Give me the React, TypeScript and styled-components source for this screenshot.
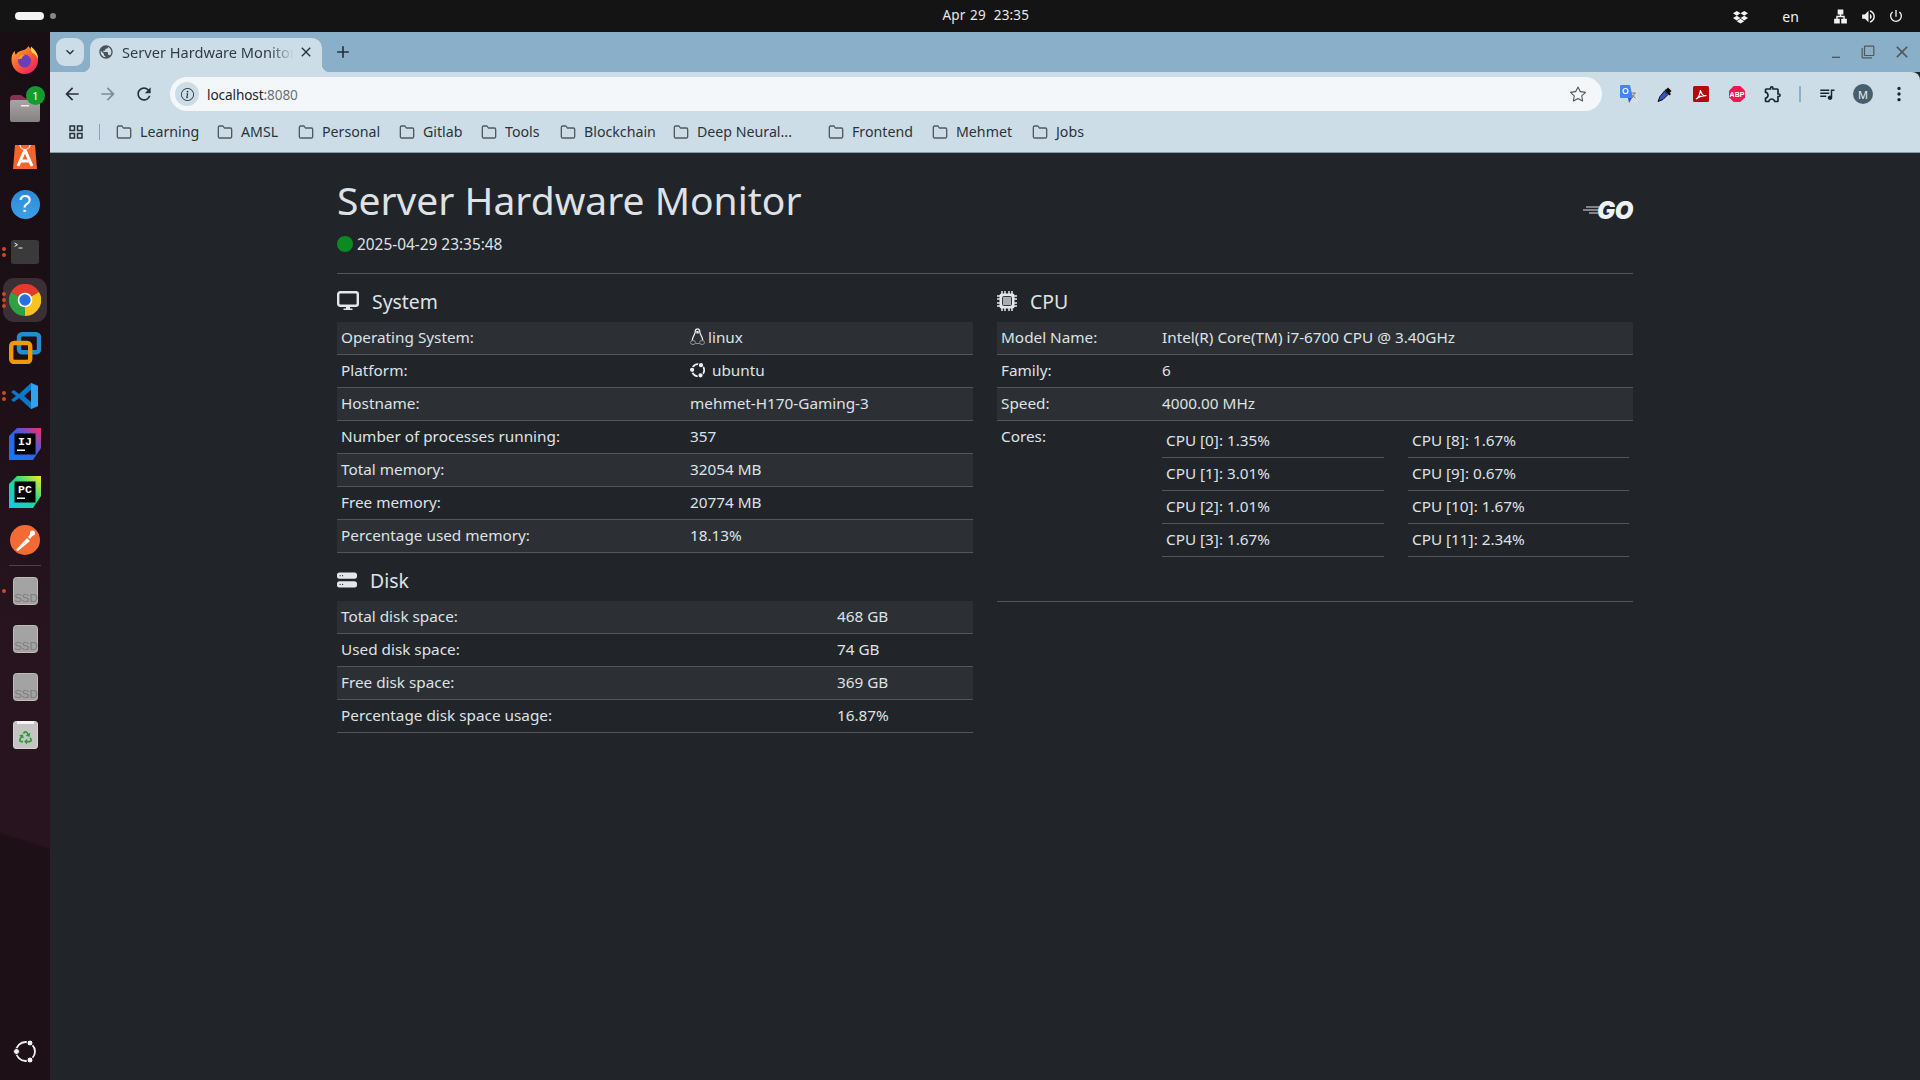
import React from "react";
import styled, { createGlobalStyle } from "styled-components";
import { BsHddStackFill, BsUbuntu, BsStar, BsInfoCircle, BsThreeDotsVertical, BsDropbox } from "react-icons/bs";
import { FaRecycle } from "react-icons/fa";
import { FiFolder } from "react-icons/fi";
import { MdArrowBack, MdArrowForward, MdRefresh, MdKeyboardArrowDown, MdAdd, MdClose, MdOutlineGridView, MdVolumeUp, MdOutlinePowerSettingsNew, MdLan, MdMinimize, MdFilterNone, MdPublic, MdQueueMusic, MdOutlineExtension } from "react-icons/md";

const Global = createGlobalStyle`
  html, body { margin: 0; padding: 0; height: 100%; overflow: hidden; background: #212529; }
  * { box-sizing: border-box; }
  body { font-family: "Noto Sans", "DejaVu Sans", sans-serif; }
`;

const Screen = styled.div`
  width: 1920px; height: 1080px; display: flex; flex-direction: column; overflow: hidden;
`;
const TopBar = styled.header`
  height: 32px; flex: none; background: #141414; color: #e8e8e8; display: grid;
  grid-template-columns: 929.5px auto 1fr; align-items: center; padding: 0 16px 0 13px;
  font-size: 13.5px; letter-spacing: .15px;
`;
const Workspaces = styled.div`display: flex; align-items: center; gap: 6px;`;
const Pill = styled.span`width: 29px; height: 8px; border-radius: 4px; background: #f4f4f4; margin-left: 2px;`;
const Dot = styled.span`width: 6px; height: 6px; border-radius: 50%; background: #888;`;
const Clock = styled.div`display: flex; gap: 8px; word-spacing: 1px; margin-top: -2px;`;
const Tray = styled.div`display: flex; justify-content: flex-end; align-items: center; color: #f2f2f2;`;
const TrayLang = styled.span`margin: 0 33px 0 34px; font-size: 14px;`;
const TrayGap = styled.span`width: 11px;`;

const Main = styled.div`flex: 1; display: flex; min-height: 0;`;
const Dock = styled.nav`
  width: 50px; flex: none; padding: 4px 0 16px; display: flex; flex-direction: column; align-items: center;
  background: linear-gradient(198deg, #180e14 0%, #1c0f16 30%, #28141f 62%, #28141f 76.6%, #1e1017 76.9%, #1e1017 100%);
`;
const Slot = styled.div<{ $active?: boolean }>`
  position: relative; width: 44px; height: 48px; display: flex; align-items: center; justify-content: center; flex: none;
  &::before {
    content: ""; display: ${(p) => (p.$active ? "block" : "none")};
    position: absolute; inset: 2px 0; border-radius: 11px; background: #3a2f35;
  }
  svg { position: relative; }
`;
const Running = styled.div`
  position: absolute; left: 0; top: 50%; transform: translateY(-50%); display: flex; flex-direction: column; gap: 2px;
  margin-left: -1px;
`;
const RunDot = styled.span`width: 4px; height: 4px; border-radius: 50%; background: #d2481c;`;
const DockRule = styled.hr`width: 32px; height: 1px; margin: 1px 0 1px; border: 0; background: #4d4248; flex: none;`;
const DockEnd = styled.div`margin-top: auto; display: flex;`;
const Badge = styled.span`
  position: absolute; right: 2px; top: 2px; width: 19px; height: 19px; border-radius: 50%; background: #119e2f;
  color: #fff; font-size: 11px; display: flex; align-items: center; justify-content: center;
`;

const Browser = styled.div`flex: 1; min-width: 0; display: flex; flex-direction: column;`;
const TabStrip = styled.div`
  height: 40px; flex: none; background: #8ab0c9; display: flex; align-items: flex-end; padding-left: 6px; position: relative; color: #27313a;
`;
const TabList = styled.button`
  width: 28px; height: 28px; margin-bottom: 6px; border: 0; border-radius: 9px; background: #cddde8; padding: 0;
  display: flex; align-items: center; justify-content: center; color: #2a3238; font-size: 16px;
`;
const Tab = styled.div`
  width: 232px; height: 34px; margin-left: 6px; background: #cddde8; border-radius: 10px 10px 0 0;
  display: flex; align-items: center; padding: 0 8px 7px; position: relative; font-size: 14.6px; color: #333c44;
  &::before, &::after { content: ""; position: absolute; bottom: 0; width: 8px; height: 8px; }
  &::before { left: -8px; background: radial-gradient(circle at 0 0, transparent 8px, #cddde8 8.5px); }
  &::after { right: -8px; background: radial-gradient(circle at 100% 0, transparent 8px, #cddde8 8.5px); }
`;
const TabTitle = styled.span`
  flex: 1; margin: 0 4px 0 8px; white-space: nowrap; overflow: hidden;
  -webkit-mask-image: linear-gradient(90deg, #000 86%, transparent 100%);
  mask-image: linear-gradient(90deg, #000 86%, transparent 100%);
`;
const NewTab = styled.div`margin: 0 0 6px 11px; height: 28px; display: flex; align-items: center; font-size: 20px; color: #27313a;`;
const WinCtl = styled.div`
  position: absolute; right: 0; top: 0; height: 40px; display: flex; align-items: center; gap: 17px; padding-right: 8px; color: #555;
`;
const Toolbar = styled.div`
  height: 44px; flex: none; background: #cddde8; border-top-right-radius: 8px; display: flex; align-items: center; padding-left: 4px; color: #20282e;
`;
const NavBtn = styled.span<{ $dim?: boolean }>`
  width: 36px; flex: none; display: flex; justify-content: center; font-size: 20px; color: ${(p) => (p.$dim ? "#7d8c97" : "#2a3238")};
`;
const Omnibox = styled.div`
  width: 1432px; height: 34px; margin-left: 8px; border-radius: 17px; background: #f3f7fa; display: flex; align-items: center; padding: 0 16px 0 5px; flex: none;
`;
const InfoChip = styled.span`
  width: 24px; height: 24px; border-radius: 50%; background: #cddde8; display: flex; align-items: center; justify-content: center; font-size: 13px; color: #1e262c;
`;
const Url = styled.span`margin-left: 8px; flex: 1; font-size: 13.6px; color: #1f2429; letter-spacing: -.1px;`;
const UrlPort = styled.span`color: #68727a;`;
const Extensions = styled.div`display: flex; align-items: center; padding-left: 9px; flex: none;`;
const Ext = styled.span`width: 36px; height: 20px; display: flex; align-items: center; justify-content: center; flex: none; font-size: 18px; color: #1c242a;`;
const TbSep = styled.span`width: 2px; height: 16px; background: #8ab0c9; margin: 0 8px; flex: none;`;
const Avatar = styled.span`
  width: 20px; height: 20px; border-radius: 50%; background: #45606c; color: #e8eef2; font-size: 11px;
  display: flex; align-items: center; justify-content: center;
`;
const Bookmarks = styled.div`
  height: 37px; flex: none; background: #cddde8; border-bottom: 1px solid #8b9aa4; display: flex; align-items: center; padding: 0 0 5px 17px; color: #2a3238;
`;
const AppsIcon = styled.span`font-size: 18px; display: flex; width: 32px;`;
const BmSep = styled.span`width: 1px; height: 16px; background: #7ea8c2; margin: 0 16px 0 0;`;
const Bookmark = styled.span<{ $w: number }>`
  width: ${(p) => p.$w}px; flex: none; display: flex; align-items: center; gap: 8px; font-size: 14.2px; color: #2b3339; white-space: nowrap;
  svg { font-size: 16px; color: #50595f; flex: none; }
`;

const Page = styled.main`flex: 1; background: #212529; color: #dee2e6; min-height: 0;`;
const Container = styled.div`width: 1296px; margin: 0 auto; padding-top: 24px; font-size: 15.3px;`;
const Header = styled.div`display: flex; justify-content: space-between; align-items: flex-start; padding-bottom: 17px; border-bottom: 1px solid #51565b;`;
const Title = styled.h1`margin: 0; font-size: 39px; line-height: 46px; font-weight: 400;`;
const Status = styled.div`display: flex; align-items: center; gap: 4px; margin-top: 9px; height: 24px; font-size: 15.4px;`;
const Led = styled.span`width: 16px; height: 16px; border-radius: 50%; background: #0a8a20;`;
const Columns = styled.div`display: grid; grid-template-columns: 636px 636px; column-gap: 24px; padding-top: 11px;`;
const Column = styled.section``;
const SectionHead = styled.h4<{ $gap?: boolean }>`
  margin: ${(p) => (p.$gap ? "11px" : "0")} 0 0; height: 37px; padding-bottom: 5px; display: flex; align-items: center; gap: 13px; font-size: 19.4px; font-weight: 400;
  svg { font-size: 20px; color: #e4e8ec; flex: none; }
`;
const Table = styled.div<{ $labels: number }>`
  display: grid; grid-template-columns: ${(p) => p.$labels}px 1fr;
`;
const Row = styled.div<{ $odd: boolean }>`
  display: grid; grid-column: 1 / -1; grid-template-columns: subgrid; min-height: 33px; border-bottom: 1px solid #51565b;
  background: ${(p) => (p.$odd ? "#2c3034" : "transparent")};
`;
const Cell = styled.div`padding: 3px 4px 5px; line-height: 24px; display: flex; align-items: flex-start;`;
const CoresCell = styled.div`padding: 4px 4px 44px; display: grid; grid-template-columns: 222px 221px; column-gap: 24px;`;
const CoreCol = styled.div``;
const CoreRow = styled.div`height: 33px; padding: 3px 4px 5px; line-height: 24px; border-bottom: 1px solid #51565b;`;
const CellIcon = styled.span<{ $gap: number }>`
  display: inline-flex; height: 24px; align-items: center; font-size: 15px; color: #eef1f3; margin-right: ${(p) => p.$gap}px;
`;

const GoWrap = styled.div`position: relative; width: 50px; height: 22px; margin-top: 23px; display: flex; justify-content: flex-end; align-items: center;`;
const GoText = styled.span`font-family: "Inter", sans-serif; font-weight: 900; font-style: italic; font-size: 24px; line-height: 22px; letter-spacing: -.4px; color: #eef1f4;`;
const GoLines = styled.svg`position: absolute; left: 0; top: 6px;`;

const DesktopIcon = () => (
  <svg width="22" height="20" viewBox="0 0 22 20">
    <rect x="1.200" y="1.200" width="19.600" height="13.600" rx="2" fill="none" stroke="#e4e8ec" strokeWidth="2.400" />
    <path d="M9 16h4v1.500h2.500V19h-9v-1.500H9z" fill="#e4e8ec" />
  </svg>
);
const ChipIcon = () => (
  <svg width="20" height="20" viewBox="0 0 20 20">
    <path d="M5 0v20M8 0v20M12 0v20M15 0v20M0 5h20M0 8h20M0 12h20M0 15h20" stroke="#e4e8ec" strokeWidth="1.500" />
    <rect x="2.500" y="2.500" width="15" height="15" rx="2" fill="#e4e8ec" />
    <rect x="5.500" y="5.500" width="9" height="9" rx="1" fill="#a9adb1" stroke="#33383c" strokeWidth="1" />
  </svg>
);
const LinuxIcon = () => (
  <svg width="15" height="18" viewBox="0 0 15 18">
    <path d="M7.500 1C6 1 5.200 2.300 5.200 4c0 2.500-3 5-3 8.500" fill="none" stroke="#e8ecef" strokeWidth="1.300" />
    <path d="M7.500 1C9 1 9.800 2.300 9.800 4c0 2.500 3 5 3 8.500" fill="none" stroke="#e8ecef" strokeWidth="1.300" />
    <path d="M6.300 3h2.400v2.500H6.300z" fill="#e8ecef" />
    <ellipse cx="3" cy="14.500" rx="2.500" ry="2" fill="none" stroke="#8d9297" strokeWidth="1" />
    <ellipse cx="12" cy="14.500" rx="2.500" ry="2" fill="none" stroke="#8d9297" strokeWidth="1" />
    <path d="M5.500 15.500h4" stroke="#8d9297" strokeWidth="1" />
  </svg>
);

const FirefoxIcon = () => (
  <svg width="30" height="30" viewBox="0 0 30 30">
    <defs>
      <linearGradient id="ff" x1="0" y1="0" x2=".8" y2="1"><stop offset="0" stopColor="#ffbd2e" /><stop offset=".45" stopColor="#ff6a2b" /><stop offset="1" stopColor="#e91e63" /></linearGradient>
    </defs>
    <path d="M1.500 15C1.500 10 3 7.500 5 6c-.3 1.600 0 2.800 1 3.500C7.500 7 10 5.800 12 5.500c3-.5 5-2 6.500-4.500 1 2.500 3 3 5 5.500 3 3.500 4.500 5.500 4.500 9 0 7.500-6 13.500-13.500 13.500S1.500 22.500 1.500 15z" fill="url(#ff)" />
    <path d="M21 1.500c3.500 3 7.500 7 7 13-1-3-3-5.500-6-7-1-2-1.500-3.500-1-6z" fill="#ffd34d" />
    <circle cx="14.500" cy="16" r="6.500" fill="#6b3db8" />
    <path d="M8 14c1-3 4-5 7-4-2 1-3 2-3 3.500-2 .5-3 .5-4 .5z" fill="#ff9a2e" />
  </svg>
);
const FilesIcon = () => (
  <svg width="32" height="30" viewBox="0 0 32 30">
    <defs>
      <linearGradient id="fb" x1="0" y1="0" x2="0" y2="1"><stop offset="0" stopColor="#a9a5a5" /><stop offset="1" stopColor="#858181" /></linearGradient>
    </defs>
    <path d="M1 6a4 4 0 0 1 4-4h7l4 3h10v6H1z" fill="#8d2f52" />
    <rect x="1" y="7" width="30" height="22" rx="2" fill="url(#fb)" />
    <rect x="12" y="12" width="8" height="1.500" fill="#eee" />
  </svg>
);
const StoreIcon = () => (
  <svg width="24" height="28" viewBox="0 0 24 28">
    <path d="M2 3h20l2 24H0z" fill="#f0662d" />
    <path d="M7 3c0 6 10 6 10 0" fill="none" stroke="#fff" strokeWidth="1" />
    <path d="M12 8 5 24M12 8l7 16M7 19h10" fill="none" stroke="#fff" strokeWidth="3" />
  </svg>
);
const HelpTile = styled.span`
  width: 29px; height: 29px; border-radius: 50%; background: linear-gradient(#2a8ad8, #3d9fe6); color: #fff; font-size: 23px;
  font-family: "Liberation Sans", sans-serif; display: flex; align-items: center; justify-content: center; position: relative;
`;
const TerminalIcon = () => (
  <svg width="28" height="24" viewBox="0 0 28 24">
    <rect width="28" height="24" rx="2.500" fill="#3a3a3a" />
    <path d="M3.500 3l3 1.700-3 1.700M7.500 8h4" fill="none" stroke="#eee" strokeWidth="1" />
  </svg>
);
const ChromeIcon = () => (
  <svg width="32" height="32" viewBox="0 0 48 48">
    <path d="M24 24 3.200 12A24 24 0 0 1 45 12z" fill="#e33b2e" />
    <path d="M24 24 45 12a24 24 0 0 1-21 36z" fill="#f9c31f" />
    <path d="M24 48A24 24 0 0 1 3.200 12L24 24l-.1 24z" fill="#319f43" />
    <circle cx="24" cy="24" r="11" fill="#fff" />
    <circle cx="24" cy="24" r="8.500" fill="#2a6fe0" />
  </svg>
);
const VmwareIcon = () => (
  <svg width="32" height="32" viewBox="0 0 32 32" fill="none">
    <rect x="10" y="2.200" width="20" height="18" rx="3" stroke="#1f8fd0" strokeWidth="4.400" />
    <rect x="2.200" y="11" width="19" height="19" rx="3" stroke="#f09a0a" strokeWidth="4.400" />
  </svg>
);
const VsCodeIcon = () => (
  <svg width="28" height="28" viewBox="0 0 28 28">
    <path d="M20 1 27 4v20l-7 3L8 16l-5 4-3-2 5-4-5-4 3-2 5 4z" fill="#0a78c8" />
    <path d="M20 1 27 4v20l-7 3z" fill="#2ea4ee" />
    <path d="M20 8v12l-7-6z" fill="#1a1118" />
  </svg>
);
const JbIcon = ({ id, a, b, c, label }: { id: string; a: string; b: string; c: string; label: string }) => (
  <svg width="32" height="32" viewBox="0 0 32 32">
    <defs>
      <linearGradient id={id} x1="0" y1="1" x2="1" y2="0"><stop offset="0" stopColor={a} /><stop offset=".55" stopColor={b} /><stop offset="1" stopColor={c} /></linearGradient>
    </defs>
    <path d="M8 0h24v20l-8 12H0V8z" fill={`url(#${id})`} />
    <rect x="5.500" y="5.500" width="21" height="21" fill="#000" />
    <text x="16" y="17" fontFamily="Liberation Mono, monospace" fontWeight="700" fontSize="11.500" fill="#fff" textAnchor="middle">{label}</text>
    <rect x="8" y="21.500" width="8" height="1.500" fill="#fff" />
  </svg>
);
const PostmanIcon = () => (
  <svg width="30" height="30" viewBox="0 0 30 30">
    <circle cx="15" cy="15" r="15" fill="#f46a35" />
    <path d="M6 25 17 13l3 3L8 26zM18 12l4-5 2 2-4 5z" fill="#fff" />
    <circle cx="22.500" cy="8" r="2.600" fill="#fff" />
  </svg>
);
const SsdIcon = () => (
  <svg width="25" height="28" viewBox="0 0 25 28">
    <rect x=".5" y=".5" width="24" height="27" rx="3" fill="#a3a3a3" stroke="#bdbdbd" />
    <text x="13" y="25" fontFamily="Liberation Sans, sans-serif" fontSize="11.500" fill="#7d7d7d" textAnchor="middle">SSD</text>
  </svg>
);
const TrashTile = styled.span`
  position: relative; width: 25px; height: 28px; border-radius: 3px; background: #c4c4c2; border: 1px solid #d4d4d2;
  display: flex; align-items: center; justify-content: center; padding-top: 4px; color: #2b9a37; font-size: 13px;
  &::before { content: ""; position: absolute; left: 3px; right: 3px; top: -1px; height: 3px; background: #f4f4f4; }
`;
const UbuntuMark = () => (
  <svg width="25" height="25" viewBox="0 0 25 25">
    <circle cx="12.500" cy="12.500" r="9.500" fill="none" stroke="#f2f2f2" strokeWidth="1.800" />
    <circle cx="17" cy="4" r="3" fill="#f2f2f2" stroke="#1e1017" strokeWidth="1" />
    <circle cx="3.500" cy="12.500" r="3" fill="#f2f2f2" stroke="#1e1017" strokeWidth="1" />
    <circle cx="17" cy="21" r="3" fill="#f2f2f2" stroke="#1e1017" strokeWidth="1" />
  </svg>
);

const TranslateIcon = () => (
  <svg width="18" height="18" viewBox="0 0 18 18">
    <path d="M8 5h9a1 1 0 0 1 1 1v11a1 1 0 0 1-1 1H9z" fill="#dcdcdc" />
    <path d="M1 0h9l3 13H1a1 1 0 0 1-1-1V1a1 1 0 0 1 1-1z" fill="#4285f4" />
    <path d="M8 13l1 5 3-5z" fill="#2a56c6" />
    <circle cx="5.500" cy="6" r="2.500" fill="none" stroke="#fff" strokeWidth="1.200" />
    <path d="M12 8h4M14 8v1c0 2-1 3-2.500 4M12.500 10c.8 1.300 1.700 2.300 3 3" fill="none" stroke="#7a7a7a" strokeWidth="1" />
  </svg>
);
const DropperIcon = () => (
  <svg width="16" height="17" viewBox="0 0 16 17">
    <path d="M9 3l5 5-1.500 1.500-5-5z" fill="#0c0c0c" />
    <path d="M11 1.500l3.500 3.500-2 2L9 3.500z" fill="#0c0c0c" />
    <path d="M7.500 5 3 10.500 1 15.500l5-2 5-5z" fill="#2f55c9" stroke="#0c0c0c" strokeWidth="1" />
  </svg>
);
const PdfIcon = () => (
  <svg width="16" height="16" viewBox="0 0 16 16">
    <rect width="16" height="16" rx="1.500" fill="#b30b0b" />
    <path d="M3 13c2-1 4-5 4.500-9 .6 4 2.500 6 6 5.700-3-.2-7 .6-10.500 3.300z" fill="none" stroke="#fff" strokeWidth="1.200" />
  </svg>
);
const AbpIcon = () => (
  <svg width="16" height="16" viewBox="0 0 16 16">
    <path d="M4.700 0h6.600L16 4.700v6.600L11.300 16H4.700L0 11.300V4.700z" fill="#f0194f" />
    <text x="8" y="11" fontFamily="Liberation Sans, sans-serif" fontWeight="700" fontSize="7" fill="#fff" textAnchor="middle">ABP</text>
  </svg>
);

type KV = [string, React.ReactNode];
const sys: KV[] = [
  ["Operating System:", <><CellIcon $gap={3}><LinuxIcon /></CellIcon>linux</>],
  ["Platform:", <><CellIcon $gap={7}><BsUbuntu /></CellIcon>ubuntu</>],
  ["Hostname:", "mehmet-H170-Gaming-3"],
  ["Number of processes running:", "357"],
  ["Total memory:", "32054 MB"],
  ["Free memory:", "20774 MB"],
  ["Percentage used memory:", "18.13%"],
];
const disk: KV[] = [
  ["Total disk space:", "468 GB"],
  ["Used disk space:", "74 GB"],
  ["Free disk space:", "369 GB"],
  ["Percentage disk space usage:", "16.87%"],
];
const cpu: KV[] = [
  ["Model Name:", "Intel(R) Core(TM) i7-6700 CPU @ 3.40GHz"],
  ["Family:", "6"],
  ["Speed:", "4000.00 MHz"],
];
const coresA = ["CPU [0]: 1.35%", "CPU [1]: 3.01%", "CPU [2]: 1.01%", "CPU [3]: 1.67%"];
const coresB = ["CPU [8]: 1.67%", "CPU [9]: 0.67%", "CPU [10]: 1.67%", "CPU [11]: 2.34%"];
const marks: [string, number][] = [["Learning", 101], ["AMSL", 81], ["Personal", 101], ["Gitlab", 82], ["Tools", 79], ["Blockchain", 113], ["Deep Neural...", 155], ["Frontend", 104], ["Mehmet", 100], ["Jobs", 60]];

const KVRows = ({ rows }: { rows: KV[] }) => (
  <>
    {rows.map(([k, v], i) => (
      <Row key={k} $odd={i % 2 === 0}>
        <Cell>{k}</Cell>
        <Cell>{v}</Cell>
      </Row>
    ))}
  </>
);

export default function App() {
  return (
    <Screen>
      <Global />
      <TopBar>
        <Workspaces><Pill /><Dot /></Workspaces>
        <Clock><span>Apr 29</span><span>23:35</span></Clock>
        <Tray>
          <BsDropbox size={15} />
          <TrayLang>en</TrayLang>
          <MdLan size={17} />
          <TrayGap />
          <MdVolumeUp size={17} />
          <TrayGap />
          <MdOutlinePowerSettingsNew size={16} />
        </Tray>
      </TopBar>
      <Main>
        <Dock>
          <Slot><FirefoxIcon /></Slot>
          <Slot><FilesIcon /><Badge>1</Badge></Slot>
          <Slot><StoreIcon /></Slot>
          <Slot><HelpTile>?</HelpTile></Slot>
          <Slot><Running><RunDot /><RunDot /></Running><TerminalIcon /></Slot>
          <Slot $active><Running><RunDot /><RunDot /><RunDot /></Running><ChromeIcon /></Slot>
          <Slot><VmwareIcon /></Slot>
          <Slot><Running><RunDot /><RunDot /></Running><VsCodeIcon /></Slot>
          <Slot><JbIcon id="ij" a="#0a7cff" b="#3a5fe0" c="#ff2a6a" label="IJ" /></Slot>
          <Slot><JbIcon id="pc" a="#12c8f0" b="#22d88a" c="#f8ea20" label="PC" /></Slot>
          <Slot><PostmanIcon /></Slot>
          <DockRule />
          <Slot><Running><RunDot /></Running><SsdIcon /></Slot>
          <Slot><SsdIcon /></Slot>
          <Slot><SsdIcon /></Slot>
          <Slot><TrashTile><FaRecycle /></TrashTile></Slot>
          <DockEnd><UbuntuMark /></DockEnd>
        </Dock>
        <Browser>
          <TabStrip>
            <TabList><MdKeyboardArrowDown /></TabList>
            <Tab>
              <MdPublic size={16} color="#4a535a" />
              <TabTitle>Server Hardware Monitor</TabTitle>
              <MdClose size={16} color="#27313a" />
            </Tab>
            <NewTab><MdAdd /></NewTab>
            <WinCtl>
              <MdMinimize size={16} />
              <MdFilterNone size={14} />
              <MdClose size={20} />
            </WinCtl>
          </TabStrip>
          <Toolbar>
            <NavBtn><MdArrowBack /></NavBtn>
            <NavBtn $dim><MdArrowForward /></NavBtn>
            <NavBtn><MdRefresh /></NavBtn>
            <Omnibox>
              <InfoChip><BsInfoCircle /></InfoChip>
              <Url>localhost<UrlPort>:8080</UrlPort></Url>
              <BsStar size={16} color="#555" />
            </Omnibox>
            <Extensions>
              <Ext><TranslateIcon /></Ext>
              <Ext><DropperIcon /></Ext>
              <Ext><PdfIcon /></Ext>
              <Ext><AbpIcon /></Ext>
              <Ext><MdOutlineExtension size={20} /></Ext>
              <TbSep />
              <Ext><MdQueueMusic /></Ext>
              <Ext><Avatar>M</Avatar></Ext>
              <Ext><BsThreeDotsVertical /></Ext>
            </Extensions>
          </Toolbar>
          <Bookmarks>
            <AppsIcon><MdOutlineGridView /></AppsIcon>
            <BmSep />
            {marks.map(([m, w]) => (
              <Bookmark key={m} $w={w}><FiFolder />{m}</Bookmark>
            ))}
          </Bookmarks>
          <Page>
            <Container>
              <Header>
                <div>
                  <Title>Server Hardware Monitor</Title>
                  <Status><Led />2025-04-29 23:35:48</Status>
                </div>
                <GoWrap>
                  <GoLines width="16" height="10" viewBox="0 0 16 10"><path d="M3 1h13M0 4h16M6 7h9" stroke="#dfe3e6" strokeWidth="1" /></GoLines>
                  <GoText>GO</GoText>
                </GoWrap>
              </Header>
              <Columns>
                <Column>
                  <SectionHead><DesktopIcon />System</SectionHead>
                  <Table $labels={349}><KVRows rows={sys} /></Table>
                  <SectionHead $gap><BsHddStackFill />Disk</SectionHead>
                  <Table $labels={496}><KVRows rows={disk} /></Table>
                </Column>
                <Column>
                  <SectionHead><ChipIcon />CPU</SectionHead>
                  <Table $labels={161}>
                    <KVRows rows={cpu} />
                    <Row $odd={false}>
                      <Cell>Cores:</Cell>
                      <CoresCell>
                        <CoreCol>{coresA.map((c) => <CoreRow key={c}>{c}</CoreRow>)}</CoreCol>
                        <CoreCol>{coresB.map((c) => <CoreRow key={c}>{c}</CoreRow>)}</CoreCol>
                      </CoresCell>
                    </Row>
                  </Table>
                </Column>
              </Columns>
            </Container>
          </Page>
        </Browser>
      </Main>
    </Screen>
  );
}
